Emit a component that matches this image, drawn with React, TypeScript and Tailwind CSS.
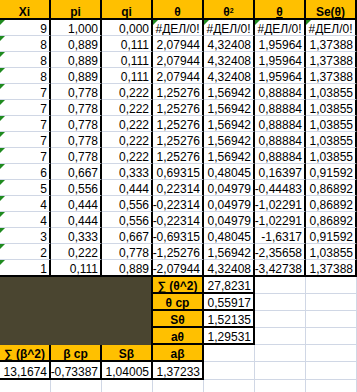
import React from 'react';

type B = 'k' | 'g' | 'n';
const RB: Record<B, string> = {
  k: 'border-r-2 border-r-black',
  g: 'border-r border-r-[#d0d7e5]',
  n: '',
};
const BB: Record<B, string> = {
  k: 'border-b-2 border-b-black',
  g: 'border-b border-b-[#d0d7e5]',
  n: '',
};

type CellProps = {
  children?: React.ReactNode;
  r?: B;
  b?: B;
  bg?: string;
  align?: 'right' | 'center';
  bold?: boolean;
  tri?: boolean;
  h?: string;
  span?: string;
};

function Cell({
  children,
  r = 'k',
  b = 'g',
  bg = 'bg-white',
  align = 'right',
  bold = false,
  tri = false,
  h = 'h-[16px]',
  span = '',
}: CellProps) {
  return (
    <div
      className={[
        'relative flex items-end overflow-hidden whitespace-nowrap',
        h,
        bg,
        RB[r],
        BB[b],
        align === 'right' ? 'justify-end pr-[2px]' : 'justify-center',
        bold ? 'font-bold' : '',
        span,
      ].join(' ')}
    >
      {tri && (
        <span className="absolute left-0 top-0 h-0 w-0 border-t-[5px] border-r-[5px] border-t-[#1f8a1f] border-r-transparent" />
      )}
      <span className="leading-[12px]">{children}</span>
    </div>
  );
}

const ERR = '#ДЕЛ/0!';

const rows: string[][] = [
  ['9', '1,000', '0,000', ERR, ERR, ERR, ERR],
  ['8', '0,889', '0,111', '2,07944', '4,32408', '1,95964', '1,37388'],
  ['8', '0,889', '0,111', '2,07944', '4,32408', '1,95964', '1,37388'],
  ['8', '0,889', '0,111', '2,07944', '4,32408', '1,95964', '1,37388'],
  ['7', '0,778', '0,222', '1,25276', '1,56942', '0,88884', '1,03855'],
  ['7', '0,778', '0,222', '1,25276', '1,56942', '0,88884', '1,03855'],
  ['7', '0,778', '0,222', '1,25276', '1,56942', '0,88884', '1,03855'],
  ['7', '0,778', '0,222', '1,25276', '1,56942', '0,88884', '1,03855'],
  ['7', '0,778', '0,222', '1,25276', '1,56942', '0,88884', '1,03855'],
  ['6', '0,667', '0,333', '0,69315', '0,48045', '0,16397', '0,91592'],
  ['5', '0,556', '0,444', '0,22314', '0,04979', '-0,44483', '0,86892'],
  ['4', '0,444', '0,556', '-0,22314', '0,04979', '-1,02291', '0,86892'],
  ['4', '0,444', '0,556', '-0,22314', '0,04979', '-1,02291', '0,86892'],
  ['3', '0,333', '0,667', '-0,69315', '0,48045', '-1,6317', '0,91592'],
  ['2', '0,222', '0,778', '-1,25276', '1,56942', '-2,35658', '1,03855'],
  ['1', '0,111', '0,889', '-2,07944', '4,32408', '-3,42738', '1,37388'],
];

const OR = 'bg-[#ffc000]';

export default function App() {
  const theta = [
    ['∑ (θ^2)', '27,8231'],
    ['θ cp', '0,55917'],
    ['Sθ', '1,52135'],
    ['aθ', '1,29531'],
  ];
  return (
    <div className="h-[392px] w-[357px] overflow-hidden bg-white font-['Liberation_Sans',Arial,sans-serif] text-[12px] text-black">
      <div className="grid grid-cols-[repeat(7,51px)]">
        {/* header */}
        <Cell bg={OR} b="k" h="h-[20px]" align="center" bold>Xi</Cell>
        <Cell bg={OR} b="k" h="h-[20px]" align="center" bold>pi</Cell>
        <Cell bg={OR} b="k" h="h-[20px]" align="center" bold>qi</Cell>
        <Cell bg={OR} b="k" h="h-[20px]" align="center" bold>θ</Cell>
        <Cell bg={OR} b="k" h="h-[20px]" align="center" bold>
          θ<sup className="text-[7px]">2</sup>
        </Cell>
        <Cell bg={OR} b="k" h="h-[20px]" align="center" bold>
          <span className="underline">θ</span>
        </Cell>
        <Cell bg={OR} b="k" h="h-[20px]" align="center" bold>
          Se(<span className="underline">θ</span>)
        </Cell>

        {/* data */}
        {rows.map((row, i) => {
          const last = i === rows.length - 1;
          return row.map((v, j) => (
            <Cell
              key={`${i}-${j}`}
              b={last ? 'k' : 'g'}
              h={last ? 'h-[17px]' : 'h-[16px]'}
              tri={j === 0 || (i === 0 && j >= 3)}
              align={v === ERR ? 'center' : 'right'}
            >
              {v}
            </Cell>
          ));
        })}

        {/* bottom block */}
        <div className="col-span-3 row-span-4 border-r-2 border-r-black bg-[#4a4530]" />
        {theta.map(([l, v], i) => (
          <React.Fragment key={l}>
            <Cell bg={OR} b="k" h="h-[17px]" align="center" bold>{l}</Cell>
            <Cell b="k" h="h-[17px]">{v}</Cell>
            <Cell r="g" b="g" h="h-[17px]" />
            <Cell r="g" b="g" h="h-[17px]" />
          </React.Fragment>
        ))}

        <Cell bg={OR} b="k" h="h-[17px]" align="center" bold>∑ (β^2)</Cell>
        <Cell bg={OR} b="k" h="h-[17px]" align="center" bold>β cp</Cell>
        <Cell bg={OR} b="k" h="h-[17px]" align="center" bold>Sβ</Cell>
        <Cell bg={OR} b="k" h="h-[17px]" align="center" bold>aβ</Cell>
        <Cell r="g" b="g" h="h-[17px]" />
        <Cell r="g" b="g" h="h-[17px]" />
        <Cell r="g" b="g" h="h-[17px]" />

        <Cell b="k" h="h-[18px]">13,1674</Cell>
        <Cell b="k" h="h-[18px]">-0,73387</Cell>
        <Cell b="k" h="h-[18px]">1,04005</Cell>
        <Cell b="k" h="h-[18px]">1,37233</Cell>
        <Cell r="g" b="g" h="h-[18px]" />
        <Cell r="g" b="g" h="h-[18px]" />
        <Cell r="g" b="g" h="h-[18px]" />

        {Array.from({ length: 7 }).map((_, j) => (
          <Cell key={`e${j}`} r="g" b="g" h="h-[17px]" />
        ))}
      </div>
    </div>
  );
}
